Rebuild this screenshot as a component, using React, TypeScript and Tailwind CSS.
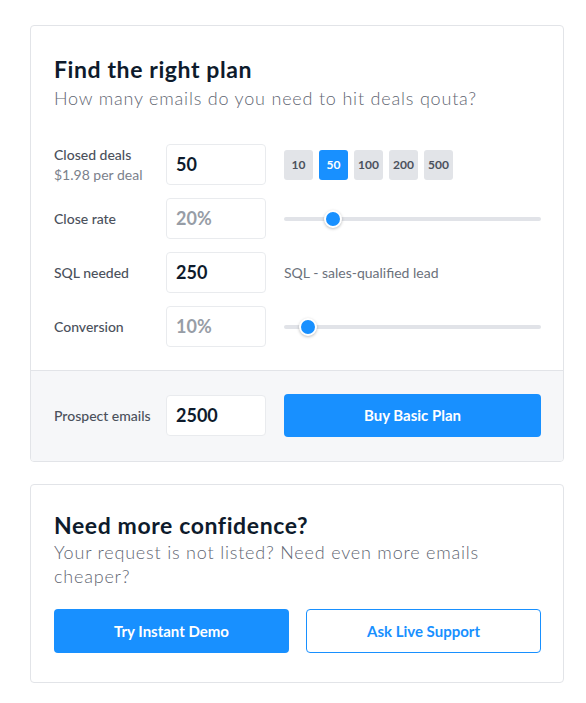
import React from "react";

const FONT = { fontFamily: "Lato, 'Noto Sans', 'Liberation Sans', sans-serif" };

function Slider({ pos }: { pos: number }) {
  return (
    <div className="relative h-[18px] w-full flex items-center">
      <div className="h-[4px] w-full rounded-full bg-[#e1e3e8]" />
      <div
        className="absolute top-1/2 -translate-y-1/2 w-[18px] h-[18px] rounded-full bg-[#1890ff] border-2 border-white shadow-[0_1px_3px_rgba(0,0,0,0.25)]"
        style={{ left: pos - 9 }}
      />
    </div>
  );
}

function Field({ value, muted }: { value: string; muted?: boolean }) {
  return (
    <div
      className={
        "w-[100px] h-[41px] shrink-0 bg-white border border-[#e9ebee] rounded-[4px] pl-[9px] flex items-center text-[18px] font-bold " +
        (muted ? "text-[#979da6]" : "text-[#0e1b2c]")
      }
    >
      {value}
    </div>
  );
}

function Row({
  label,
  sub,
  value,
  muted,
  children,
}: {
  label: string;
  sub?: string;
  value: string;
  muted?: boolean;
  children?: React.ReactNode;
}) {
  return (
    <div className="flex items-center h-[41px]">
      <div className="w-[112px] shrink-0 text-[14px] leading-[20px]">
        <div className="font-medium text-[#4b515c]">{label}</div>
        {sub && <div className="text-[#7b818b]">{sub}</div>}
      </div>
      <Field value={value} muted={muted} />
      <div className="ml-[18px] flex-1 flex items-center">{children}</div>
    </div>
  );
}

export default function App() {
  const chips = ["10", "50", "100", "200", "500"];
  return (
    <div className="min-h-screen bg-white pt-[25px] pl-[30px]" style={FONT}>
      <div className="w-[534px] border border-[#e2e4e8] rounded-[4px] overflow-hidden">
        <div className="pl-[23px] pr-[22px] pt-[29px] pb-[23px]">
          <h1 className="text-[23px] leading-[28px] font-bold tracking-[0.6px] text-[#0e1b2c]">Find the right plan</h1>
          <p className="text-[18px] leading-[24px] font-light tracking-[0.8px] text-[#5f6672] mt-[3px]">
            How many emails do you need to hit deals qouta?
          </p>
          <div className="mt-[34px] flex flex-col gap-[13px]">
            <Row label="Closed deals" sub="$1.98 per deal" value="50">
              <div className="flex gap-[6px]">
                {chips.map((c) => (
                  <div
                    key={c}
                    className={
                      "w-[29px] h-[30px] rounded-[3px] flex items-center justify-center text-[12px] font-bold " +
                      (c === "50" ? "bg-[#1890ff] text-white" : "bg-[#e2e4e8] text-[#4b515c]")
                    }
                  >
                    {c}
                  </div>
                ))}
              </div>
            </Row>
            <Row label="Close rate" value="20%" muted>
              <Slider pos={49} />
            </Row>
            <Row label="SQL needed" value="250">
              <span className="text-[14px] text-[#6b717b]">SQL - sales-qualified lead</span>
            </Row>
            <Row label="Conversion" value="10%" muted>
              <Slider pos={24} />
            </Row>
          </div>
        </div>
        <div className="border-t border-[#e2e4e8] bg-[#f6f7f9] pl-[23px] pr-[22px] pt-[23px] pb-[24px] flex items-center">
          <div className="w-[112px] shrink-0 text-[14px] font-medium text-[#4b515c]">Prospect emails</div>
          <Field value="2500" />
          <button className="ml-[18px] flex-1 h-[43px] rounded-[4px] bg-[#1890ff] text-white text-[15px] font-bold">
            Buy Basic Plan
          </button>
        </div>
      </div>

      <div className="mt-[22px] w-[534px] border border-[#e2e4e8] rounded-[4px] pl-[23px] pr-[22px] pt-[26px] pb-[29px]">
        <h2 className="text-[23px] leading-[28px] font-bold tracking-[0.6px] text-[#0e1b2c]">Need more confidence?</h2>
        <p className="text-[18px] leading-[24px] font-light tracking-[0.8px] text-[#5f6672] mt-[1px]">
          Your request is not listed? Need even more emails cheaper?
        </p>
        <div className="mt-[21px] grid grid-cols-2 gap-[17px]">
          <button className="h-[44px] rounded-[4px] bg-[#1890ff] text-white text-[15px] font-bold">
            Try Instant Demo
          </button>
          <button className="h-[44px] rounded-[4px] bg-white border border-[#1890ff] text-[#1890ff] text-[15px] font-bold">
            Ask Live Support
          </button>
        </div>
      </div>
    </div>
  );
}
